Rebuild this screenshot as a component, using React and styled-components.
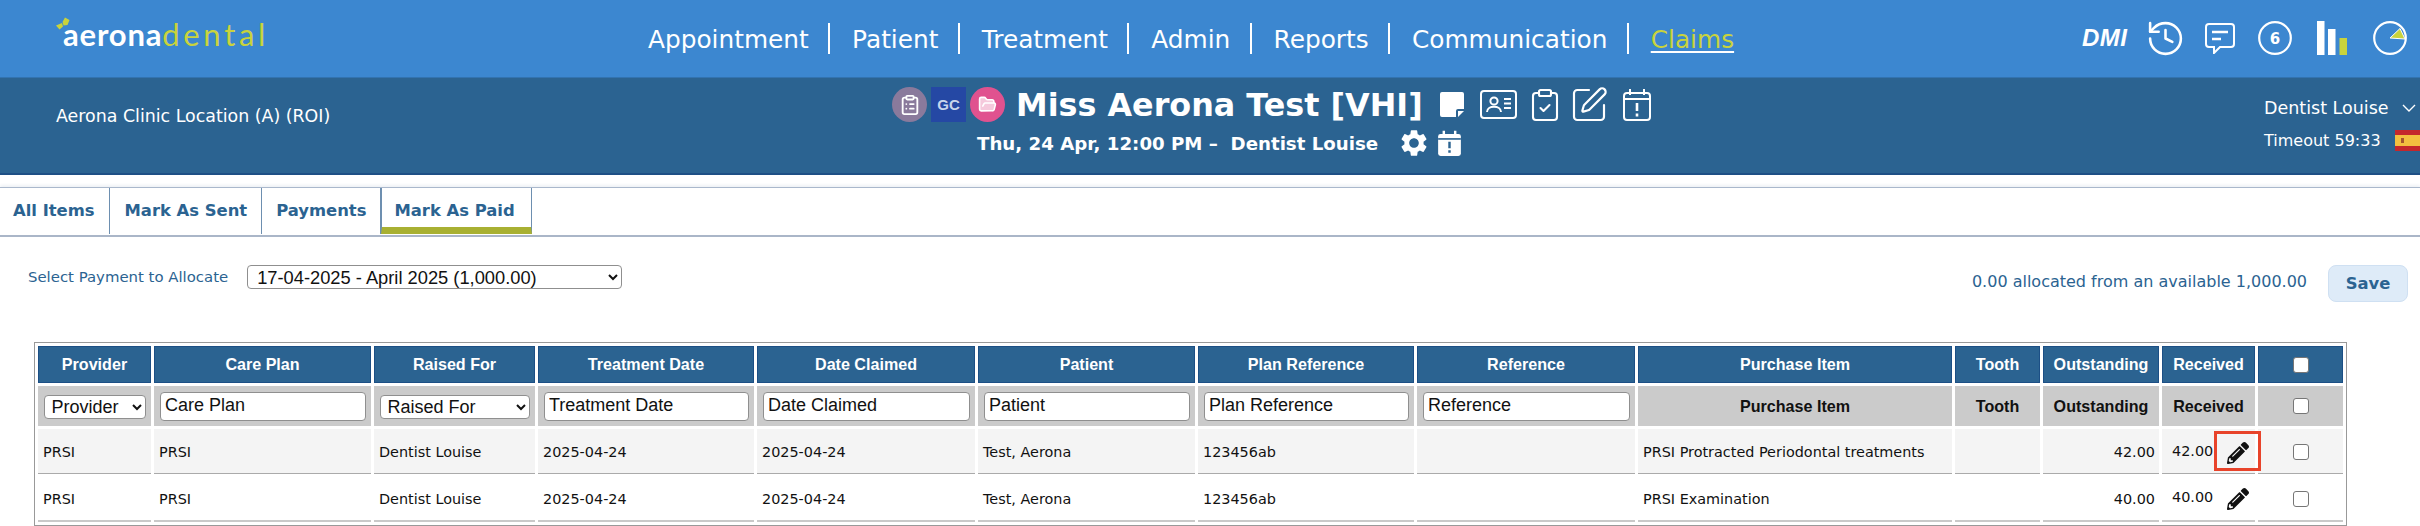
import React from 'react';
import styled, { createGlobalStyle } from 'styled-components';
import { History, ClipboardList, ClipboardCheck, SquarePen, FolderOpen } from 'lucide-react';
import { FaPencilAlt } from 'react-icons/fa';
import { MdSettings } from 'react-icons/md';

const Global = createGlobalStyle`
  html, body { margin: 0; padding: 0; background: #fff; }
  body { font-family: "DejaVu Sans", sans-serif; width: 2420px; height: 526px; overflow: hidden; }
  * { box-sizing: border-box; }
`;

const TopBar = styled.header`
  height: 78px; background: #3c87d0; border-bottom: 1px solid #3273b0;
  display: flex; align-items: flex-start; padding-left: 56px; color: #fff;
`;
const Logo = styled.div`
  width: 570px; height: 78px; display: flex; align-items: baseline; padding-top: 12px; position: relative;
  font-family: Lato, sans-serif; font-size: 31px; line-height: 44px;
`;
const Bow = styled.svg`position: absolute; left: 0; top: 17px;`;
const LogoA = styled.span`color: #fff; font-weight: 700; padding-left: 7px; letter-spacing: 0.8px;`;
const LogoB = styled.span`color: #c9d33c; font-weight: 400; letter-spacing: 3.7px;`;
const Nav = styled.nav`display: flex; align-items: center; margin-top: 23px;`;
const NavItem = styled.a`
  display: block; height: 31px; line-height: 33px; font-size: 24.8px; padding: 0 19.3px 0 22px;
  border-left: ${p => (p.$first ? '0' : '2px solid #fff')};
  color: ${p => (p.$active ? '#c9d33c' : '#fff')};
  white-space: nowrap;
  ${p => p.$active && 'text-decoration: underline; text-decoration-color: #fff; text-underline-offset: 3px;'}
`;
const TopIcons = styled.div`
  margin-left: auto; padding-right: 13px; height: 78px; display: flex; align-items: center; position: relative; top: -1px;
`;
const Dmi = styled.span`
  font-family: "Liberation Sans", sans-serif; font-weight: 700; font-style: italic; font-size: 24px; letter-spacing: 0.5px;
  width: 45px; display: block; white-space: nowrap;
`;
const TopIcon = styled.span`
  display: flex; width: ${p => p.$w}px; margin-left: ${p => p.$ml}px; justify-content: center;
  & > svg { flex: none; }
`;

const SubBar = styled.section`
  height: 97px; background: #2b6391; border-bottom: 2px solid #1e4f85; color: #fff;
  display: flex; padding-left: 56px; position: relative;
`;
const Location = styled.div`width: 836px; font-size: 17.4px; line-height: 22px; padding-top: 27px; white-space: nowrap;`;
const Center = styled.div`padding-top: 9px;`;
const TitleRow = styled.div`display: flex; align-items: center; height: 35px;`;
const Round = styled.span`
  width: 35px; height: 35px; border-radius: ${p => (p.$square ? '0' : '50%')}; background: ${p => p.$bg};
  display: flex; align-items: center; justify-content: center; margin-right: 4px; flex: none;
`;
const Gc = styled.span`font-family: "Liberation Sans", sans-serif; font-size: 15px; font-weight: 700; color: #c9d5ec;`;
const Title = styled.h1`
  margin: 0 0 0 7px; font-size: 31.8px; line-height: 37px; font-weight: 700; white-space: nowrap; width: 423px;
`;
const ActionIcon = styled.span`display: flex; margin-left: ${p => p.$ml}px; justify-content: center; flex: none;`;
const DateRow = styled.div`display: flex; align-items: center; height: 26px; margin-top: 8px; padding-left: 85px;`;
const DateText = styled.span`font-size: 18.2px; font-weight: 700; white-space: pre; width: 424px;`;
const RightBlock = styled.div`
  margin-left: auto; width: 156px; font-size: 17.5px; padding-top: 19px;
`;
const UserRow = styled.div`display: flex; align-items: center; height: 22px; gap: 13px; white-space: nowrap;`;
const TimeoutRow = styled.div`
  display: flex; align-items: center; height: 22px; margin-top: 10px; font-size: 16px; white-space: nowrap; gap: 14px;
`;

const Tabs = styled.div`
  margin-top: 12px; height: 50px; display: flex; border-top: 1px solid #aab8cc; border-bottom: 2px solid #aab6c8;
  box-shadow: 0 -2px 3px #eef1f5; padding-bottom: 3px;
`;
const Tab = styled.div`
  height: 46px; line-height: 46px; padding: 0 ${p => p.$pr}px 0 ${p => p.$pl}px; font-size: 16.4px; font-weight: 700;
  color: #2b6391; border-right: 1px solid #6d8fb0; white-space: nowrap;
  ${p => p.$active && 'border-bottom: 7px solid #a8b032; border-left: 1px solid #6d8fb0;'}
`;

const AllocBar = styled.div`
  display: flex; align-items: flex-start; padding: 28px 12px 0 28px; height: 105px; color: #2b6391;
`;
const AllocLabel = styled.label`font-size: 14.9px; line-height: 24px; white-space: nowrap; margin-right: 19px;`;
const PaymentSelect = styled.select`
  width: 375px; height: 24px; font-family: "Liberation Sans", sans-serif; font-size: 18.3px; color: #111;
  background: #fff; border: 1px solid #8f8f8f; border-radius: 4px; padding: 0 0 0 5px;
`;
const AllocSummary = styled.div`
  margin-left: auto; font-size: 16px; line-height: 34px; white-space: nowrap; margin-right: 21px;
`;
const Save = styled.button`
  width: 80px; height: 37px; background: #deebf8; border: 1px solid #cfe0f2; border-radius: 8px;
  color: #2b6391; font-family: "DejaVu Sans", sans-serif; font-size: 16.4px; font-weight: 700;
`;

const GridWrap = styled.div`padding-left: 34px;`;
const Table = styled.table`
  width: 2313px; table-layout: fixed; border-collapse: separate; border-spacing: 3px; border: 1px solid #999;
`;
const Col = styled.col`width: ${p => p.$w}px;`;
const Th = styled.th`
  height: 37px; background: #2b6391; border: 1px solid #1c4f85; color: #fff; padding: 0;
  font-family: "Liberation Sans", sans-serif; font-size: 16.1px; font-weight: 700; text-align: center; white-space: nowrap;
`;
const Fh = styled.td`
  height: 40px; background: #cbcbcb; padding: 0; text-align: center; color: #111;
  font-family: "Liberation Sans", sans-serif; font-size: 16.1px; font-weight: 700; white-space: nowrap;
`;
const FilterSelect = styled.select`
  display: block; height: 24px; width: ${p => p.$w}px; margin: 1px auto 0; font-family: "Liberation Sans", sans-serif; font-size: 18px; color: #111;
  background: #fff; border: 1px solid #8f8f8f; border-radius: 4px; padding: 0 0 0 3px;
`;
const FilterInput = styled.input`
  display: block; width: calc(100% - 11px); height: 29px; margin: 0 0 0 6px; padding: 0 0 2px 4px;
  font-family: "Liberation Sans", sans-serif; font-size: 18px; color: #111;
  background: #fff; border: 1px solid #8f8f8f; border-radius: 4px;
  &::placeholder { color: #111; opacity: 1; }
`;
const Td = styled.td`
  height: 45px; background: ${p => (p.$odd ? '#f4f4f4' : '#fff')};
  border-bottom: ${p => (p.$odd ? '1px solid #aaa' : '2px solid #c9c9c9')};
  padding: ${p => (p.$odd ? 2 : 0)}px ${p => (p.$num ? 4 : 5)}px 0 5px; font-size: 14.4px; color: #111; white-space: nowrap;
  text-align: ${p => (p.$num ? 'right' : 'left')};
  position: relative;
`;
const Center2 = styled.div`display: flex; justify-content: center; align-items: center;`;
const Check = styled.input.attrs({ type: 'checkbox' })`
  appearance: none; display: block; margin: 0; width: 16px; height: 16px; background: #fff; border: 1px solid #767676; border-radius: 3px;
`;
const ReceivedCell = styled.div`display: flex; align-items: center; gap: 14px; margin-top: -3px; padding-left: 5px;`;
const PencilWrap = styled.span`display: flex; position: relative; top: 2px;`;
const Mark = styled.span`
  position: absolute; z-index: 2; left: 52px; top: 2px; width: 47px; height: 40px; border: 3px solid #e8432a; pointer-events: none;
`;

const Note = () => (
  <svg width="25" height="26" viewBox="0 0 25 26"><path fill="#fff" d="M3 0h20a2 2 0 0 1 2 2v15h-6a2 2 0 0 0-2 2v6H3a2 2 0 0 1-2-2V2a2 2 0 0 1 2-2z" /><path fill="#fff" d="M19 19h6l-6 6z" /></svg>
);
const IdCard = () => (
  <svg width="37" height="29" viewBox="0 0 37 29" fill="none" stroke="#fff" strokeWidth="2"><rect x="1" y="1" width="35" height="27" rx="3" /><circle cx="14" cy="11" r="3.6" /><path d="M7 22c0-7 14-7 14 0" /><path d="M24 9h7M24 13.5h7M24 18h7" /></svg>
);
const CalAlert = ({ solid, w, h }) => (
  <svg width={w} height={h} viewBox="0 0 28 32" fill="none" stroke="#fff" strokeWidth="2">
    {solid ? (
      <>
        <path fill="#fff" stroke="none" d="M3 5h22a3 3 0 0 1 3 3v21a3 3 0 0 1-3 3H3a3 3 0 0 1-3-3V8a3 3 0 0 1 3-3z" />
        <path stroke="#fff" strokeWidth="3" d="M7 1v6M21 1v6" />
        <path stroke="#2b6391" strokeWidth="2" d="M0 11h28" />
        <path stroke="#2b6391" strokeWidth="3" d="M14 14.5v8M14 25v3" />
      </>
    ) : (
      <>
        <rect x="1" y="4" width="26" height="27" rx="3" />
        <path d="M1 10h26M7 0v6M21 0v6" />
        <path strokeWidth="2.6" d="M14 14v8M14 24.5v3" />
      </>
    )}
  </svg>
);
const Chat = () => (
  <svg width="30" height="31" viewBox="0 0 30 31" fill="none" stroke="#fff" strokeWidth="2"><path d="M4 1h22a3 3 0 0 1 3 3v17a3 3 0 0 1-3 3H15l-6 6v-6H4a3 3 0 0 1-3-3V4a3 3 0 0 1 3-3z" /><path strokeWidth="2.4" d="M7 9h16M7 16h9" /></svg>
);
const CountCircle = () => (
  <svg width="34" height="34" viewBox="0 0 34 34" fill="none"><circle cx="17" cy="17" r="15.8" stroke="#fff" strokeWidth="2.2" /><text x="17" y="22.5" textAnchor="middle" fontFamily="DejaVu Sans" fontWeight="700" fontSize="15" fill="#fff">6</text></svg>
);
const Bars = () => (
  <svg width="30" height="34" viewBox="0 0 30 34"><rect x="0" width="7.5" height="34" fill="#fff" /><rect x="11" y="8" width="7.5" height="26" fill="#fff" /><rect x="22.5" y="17" width="7.5" height="17" fill="#c9d33c" /></svg>
);
const Pie = () => (
  <svg width="34" height="34" viewBox="0 0 34 34" fill="none"><circle cx="17" cy="17" r="15.8" stroke="#fff" strokeWidth="2.2" /><path d="M17 17 L27 7.5 L32 18 Z" fill="#c9d33c" stroke="#fff" strokeWidth="1" /></svg>
);
const Flag = () => (
  <svg width="25" height="21" viewBox="0 0 25 21"><rect width="25" height="21" fill="#c4272c" /><rect y="5" width="25" height="11" fill="#f3bf3f" /><rect x="6" y="8" width="3" height="5" fill="#a6562d" /></svg>
);
const BowIcon = () => (
  <Bow width="14" height="14" viewBox="0 0 14 14"><path fill="#c9d33c" d="M0 8.5 L6 6 L7 9.5 L3.5 12.5 Z M6.5 5 L9 0.5 L13.5 3 L11.5 8 L7.5 8.5 Z" /></Bow>
);

const cols = [113, 217, 161, 216, 218, 217, 216, 218, 314, 85, 116, 93, 85];
const headers = ['Provider', 'Care Plan', 'Raised For', 'Treatment Date', 'Date Claimed', 'Patient', 'Plan Reference', 'Reference', 'Purchase Item', 'Tooth', 'Outstanding', 'Received'];
const rows = [
  { item: 'PRSI Protracted Periodontal treatments', amt: '42.00', mark: true },
  { item: 'PRSI Examination', amt: '40.00', mark: false },
];

export default function App() {
  return (
    <>
      <Global />
      <TopBar>
        <Logo>
          <BowIcon />
          <LogoA>aerona</LogoA><LogoB>dental</LogoB>
        </Logo>
        <Nav>
          <NavItem $first>Appointment</NavItem>
          <NavItem>Patient</NavItem>
          <NavItem>Treatment</NavItem>
          <NavItem>Admin</NavItem>
          <NavItem>Reports</NavItem>
          <NavItem>Communication</NavItem>
          <NavItem $active>Claims</NavItem>
        </Nav>
        <TopIcons>
          <Dmi>DMI</Dmi>
          <TopIcon $w={31} $ml={23}><History size={41} strokeWidth={1.5} color="#fff" /></TopIcon>
          <TopIcon $w={30} $ml={24}><Chat /></TopIcon>
          <TopIcon $w={34} $ml={23}><CountCircle /></TopIcon>
          <TopIcon $w={30} $ml={25}><Bars /></TopIcon>
          <TopIcon $w={34} $ml={26}><Pie /></TopIcon>
        </TopIcons>
      </TopBar>
      <SubBar>
        <Location>Aerona Clinic Location (A) (ROI)</Location>
        <Center>
          <TitleRow>
            <Round $bg="#8a7a9c"><ClipboardList size={22} color="#fff" /></Round>
            <Round $square $bg="#2548a4"><Gc>GC</Gc></Round>
            <Round $bg="#e0528f"><FolderOpen size={19} color="#fff" fill="#f5c9dc" /></Round>
            <Title>Miss Aerona Test [VHI]</Title>
            <ActionIcon $ml={0}><Note /></ActionIcon>
            <ActionIcon $ml={16}><IdCard /></ActionIcon>
            <ActionIcon $ml={10}><ClipboardCheck size={36} color="#fff" strokeWidth={1.4} /></ActionIcon>
            <ActionIcon $ml={6}><SquarePen size={40} color="#fff" strokeWidth={1.3} /></ActionIcon>
            <ActionIcon $ml={14}><CalAlert w={28} h={32} /></ActionIcon>
          </TitleRow>
          <DateRow>
            <DateText>{'Thu, 24 Apr, 12:00 PM –  Dentist Louise'}</DateText>
            <MdSettings size={32} color="#fff" style={{ margin: '0 8px 0 -3px' }} />
            <CalAlert solid w={23} h={26} />
          </DateRow>
        </Center>
        <RightBlock>
          <UserRow>Dentist Louise <svg width="14" height="9" viewBox="0 0 14 9" fill="none" stroke="#fff" strokeWidth="1.4"><path d="M1 1l6 6 6-6" /></svg></UserRow>
          <TimeoutRow>Timeout 59:33 <Flag /></TimeoutRow>
        </RightBlock>
      </SubBar>
      <Tabs>
        <Tab $pl={13} $pr={14}>All Items</Tab>
        <Tab $pl={15} $pr={14}>Mark As Sent</Tab>
        <Tab $pl={14} $pr={14}>Payments</Tab>
        <Tab $active $pl={12} $pr={16}>Mark As Paid</Tab>
      </Tabs>
      <AllocBar>
        <AllocLabel>Select Payment to Allocate</AllocLabel>
        <PaymentSelect defaultValue="a"><option value="a">17-04-2025 - April 2025 (1,000.00)</option></PaymentSelect>
        <AllocSummary>0.00 allocated from an available 1,000.00</AllocSummary>
        <Save>Save</Save>
      </AllocBar>
      <GridWrap>
        <Table>
          <colgroup>{cols.map((w, i) => <Col key={i} $w={w} />)}</colgroup>
          <thead>
            <tr>
              {headers.map(h => <Th key={h}>{h}</Th>)}
              <Th><Center2><Check /></Center2></Th>
            </tr>
          </thead>
          <tbody>
            <tr>
              <Fh><FilterSelect $w={102} defaultValue="p"><option value="p">Provider</option></FilterSelect></Fh>
              <Fh><FilterInput placeholder="Care Plan" /></Fh>
              <Fh><FilterSelect $w={150} defaultValue="r"><option value="r">Raised For</option></FilterSelect></Fh>
              <Fh><FilterInput placeholder="Treatment Date" /></Fh>
              <Fh><FilterInput placeholder="Date Claimed" /></Fh>
              <Fh><FilterInput placeholder="Patient" /></Fh>
              <Fh><FilterInput placeholder="Plan Reference" /></Fh>
              <Fh><FilterInput placeholder="Reference" /></Fh>
              <Fh>Purchase Item</Fh>
              <Fh>Tooth</Fh>
              <Fh>Outstanding</Fh>
              <Fh>Received</Fh>
              <Fh><Center2><Check /></Center2></Fh>
            </tr>
            {rows.map((r, i) => {
              const odd = i === 0;
              return (
                <tr key={r.item}>
                  <Td $odd={odd}>PRSI</Td>
                  <Td $odd={odd}>PRSI</Td>
                  <Td $odd={odd}>Dentist Louise</Td>
                  <Td $odd={odd}>2025-04-24</Td>
                  <Td $odd={odd}>2025-04-24</Td>
                  <Td $odd={odd}>Test, Aerona</Td>
                  <Td $odd={odd}>123456ab</Td>
                  <Td $odd={odd} />
                  <Td $odd={odd}>{r.item}</Td>
                  <Td $odd={odd} />
                  <Td $odd={odd} $num>{r.amt}</Td>
                  <Td $odd={odd}>
                    <ReceivedCell>{r.amt}<PencilWrap><FaPencilAlt size={22} color="#111" /></PencilWrap></ReceivedCell>
                    {r.mark && <Mark />}
                  </Td>
                  <Td $odd={odd}><Center2><Check /></Center2></Td>
                </tr>
              );
            })}
          </tbody>
        </Table>
      </GridWrap>
    </>
  );
}
